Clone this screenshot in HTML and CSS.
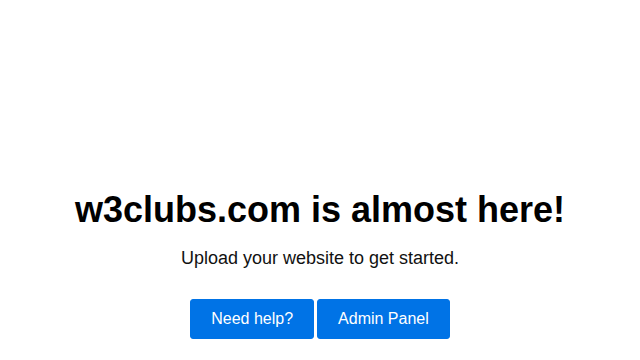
FILE: index.html
```html
<!DOCTYPE html>
<html lang="en">
<head>
<meta charset="utf-8">
<title>w3clubs.com</title>
<link rel="stylesheet" href="styles.css">
</head>
<body>
<main class="page">
  <h1 class="title">w3clubs.com is almost here!</h1>
  <p class="subtitle">Upload your website to get started.</p>
  <div class="actions">
    <a class="btn" href="#">Need help?</a>
    <a class="btn" href="#">Admin Panel</a>
  </div>
</main>
</body>
</html>
```

FILE: styles.css
```css
html, body {
  margin: 0;
  padding: 0;
  background: #fff;
}
body {
  font-family: "Liberation Sans", Arial, sans-serif;
  color: #000;
}
.page {
  padding-top: 189px;
  text-align: center;
}
.title {
  margin: 0 0 17px;
  font-size: 36px;
  font-weight: bold;
  line-height: normal;
}
.subtitle {
  margin: 0 0 30px;
  font-size: 18px;
  line-height: normal;
  color: #111;
}
.actions {
  display: flex;
  justify-content: center;
  gap: 3px;
}
.btn {
  display: inline-block;
  padding: 10px 20px;
  border: 1px solid #0073e6;
  border-radius: 3px;
  background: #0073e6;
  color: #fff;
  font-size: 16px;
  line-height: normal;
  text-decoration: none;
}
```
